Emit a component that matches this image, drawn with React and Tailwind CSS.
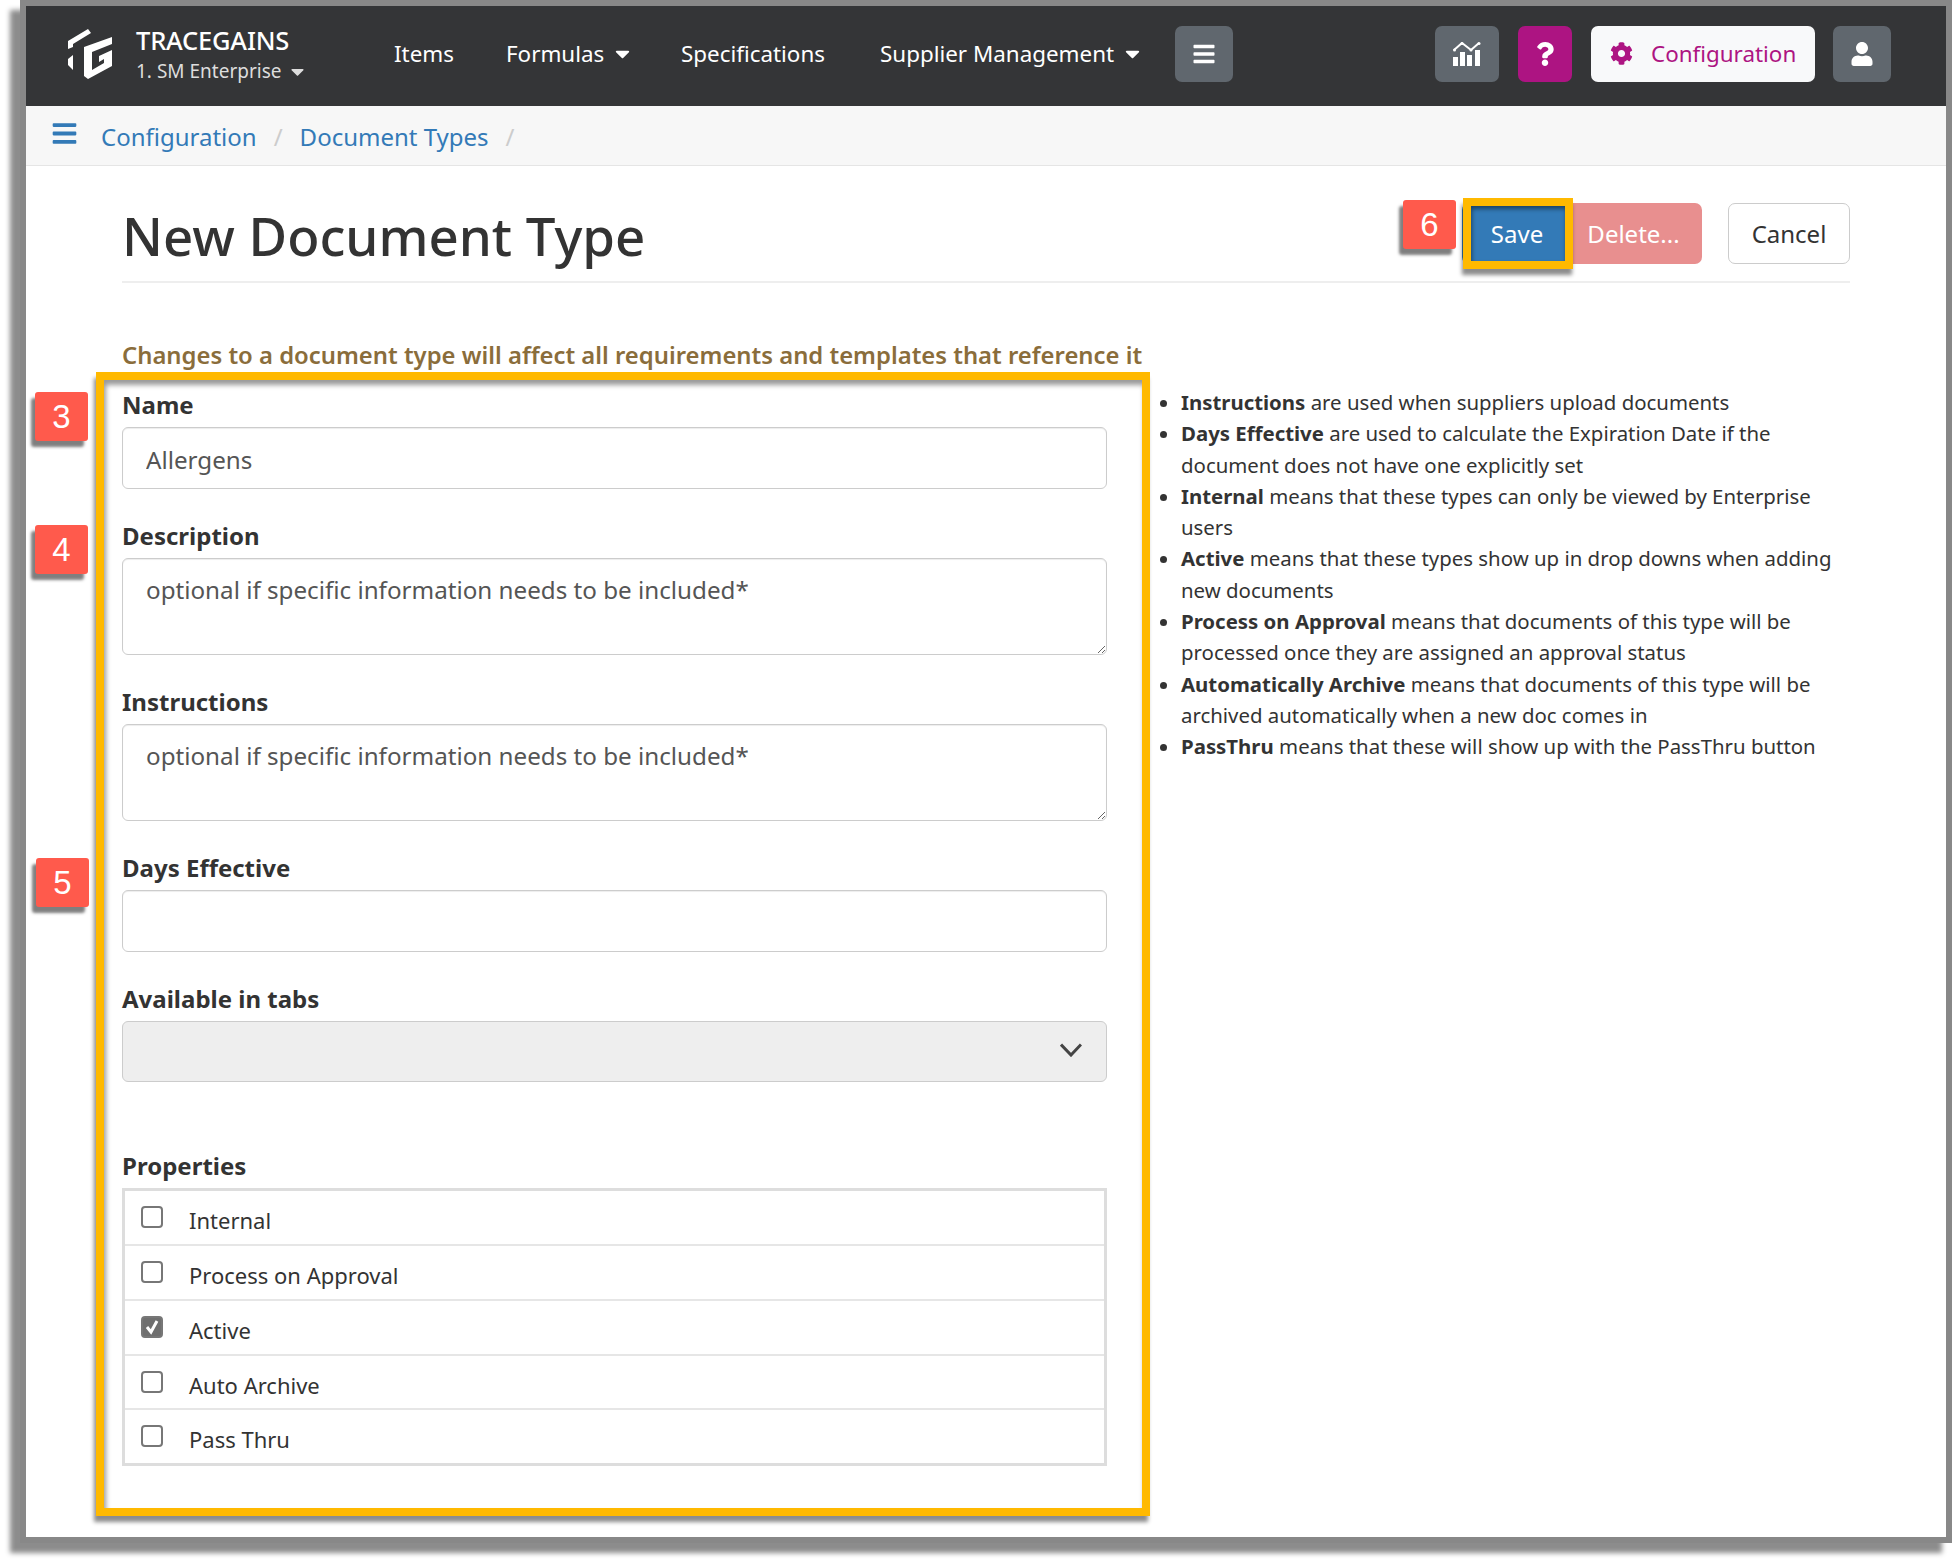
import { FaBars, FaCaretDown, FaCog, FaQuestion, FaUser } from "react-icons/fa";

const navLinks = [
  { label: "Items", width: "w-[112px]" },
  { label: "Formulas", width: "w-[175px]", caret: true },
  { label: "Specifications", width: "w-[199px]" },
  { label: "Supplier Management", width: "w-[295px]", caret: true },
];

const helpLines = [
  ["Instructions", "are used when suppliers upload documents"],
  ["Days Effective", "are used to calculate the Expiration Date if the document does not have one explicitly set"],
  ["Internal", "means that these types can only be viewed by Enterprise users"],
  ["Active", "means that these types show up in drop downs when adding new documents"],
  ["Process on Approval", "means that documents of this type will be processed once they are assigned an approval status"],
  ["Automatically Archive", "means that documents of this type will be archived automatically when a new doc comes in"],
  ["PassThru", "means that these will show up with the PassThru button"],
];

const properties = [
  { label: "Internal" },
  { label: "Process on Approval" },
  { label: "Active", checked: true },
  { label: "Auto Archive" },
  { label: "Pass Thru" },
];

const Logo = () => (
  <svg viewBox="0 0 44 50" className="w-[44px] h-[50px] shrink-0" fill="#fff">
    <polygon points="0,12 20,0 23,4 5,15 5,18 0,20" />
    <polygon points="0,30 5,26 5,41 0,36" />
    <polygon points="16,18 44,8 44,15 24,23 24,41 36,34 36,30 31,33 31,27 44,21 44,37 20,50 16,47" />
  </svg>
);

const ChartIcon = () => (
  <svg viewBox="0 0 28 24" className="w-[28px] h-[24px]" fill="#fff">
    <polyline points="1,8 9,1 18,8 26,1" fill="none" stroke="#fff" strokeWidth="2" />
    <circle cx="1.5" cy="8" r="1.5" />
    <circle cx="9" cy="1.5" r="1.5" />
    <circle cx="18" cy="8" r="1.5" />
    <circle cx="26" cy="1.5" r="1.5" />
    <rect x="0" y="15" width="5" height="9" />
    <rect x="7" y="10" width="5" height="14" />
    <rect x="14" y="13" width="5" height="11" />
    <rect x="22" y="8" width="5" height="16" />
  </svg>
);

const Badge = ({ children, className }) => (
  <div
    className={`absolute w-[53px] h-[49px] bg-[#ff5a4c] rounded-[3px] flex items-center justify-center text-white text-[33px] font-['Liberation_Sans',sans-serif] shadow-[-4px_6px_3px_rgba(0,0,0,0.5)] ${className}`}
  >
    {children}
  </div>
);

const Field = ({ label, className, children }) => (
  <div className={className}>
    <label className="block font-bold text-[24px] leading-[32px] pt-[1px] mb-[6px] text-[#333]">{label}</label>
    {children}
  </div>
);

const inputClass =
  "w-full px-[23px] border border-[#ccc] rounded-[6px] shadow-[inset_0_1px_1px_rgba(0,0,0,0.075)] text-[#555] text-[24.2px]";

export default function App() {
  return (
    <div className="h-[1563px] bg-white font-['Noto_Sans',sans-serif] text-[#333] overflow-hidden pl-[20px]">
      <div className="relative h-[1543px] border-x-[6px] border-y-[6px] border-[#888] bg-white shadow-[-10px_10px_5px_rgba(0,0,0,0.45)]">
        <nav className="h-[100px] bg-[#343537] flex items-center pl-[42px] pr-[55px] pb-[5px]">
          <div className="flex items-center gap-[24px] w-[326px]">
            <Logo />
            <div className="pt-[4px]">
              <div className="text-white text-[25.5px] font-medium leading-[31px] tracking-[-0.2px]">TRACEGAINS</div>
              <div className="text-[#ddd] text-[19px] leading-[30px] flex items-center gap-[6px]">
                1. SM Enterprise <FaCaretDown className="text-[21px]" />
              </div>
            </div>
          </div>
          {navLinks.map((link) => (
            <div key={link.label} className={`${link.width} text-white text-[22.4px] flex items-center gap-[7px]`}>
              {link.label}
              {link.caret && <FaCaretDown className="text-[23px]" />}
            </div>
          ))}
          <button className="w-[58px] h-[56px] rounded-[7px] bg-[#60676e] flex items-center justify-center text-white text-[24px]">
            <FaBars />
          </button>
          <div className="ml-auto flex items-center">
            <button className="w-[64px] h-[56px] rounded-[7px] bg-[#60676e] flex items-center justify-center">
              <ChartIcon />
            </button>
            <button className="ml-[19px] w-[54px] h-[56px] rounded-[7px] bg-[#ad1482] flex items-center justify-center text-white text-[24px]">
              <FaQuestion />
            </button>
            <button className="ml-[19px] w-[224px] h-[56px] rounded-[7px] bg-[#f8f9fa] flex items-center pl-[19px] text-[#ad1482] text-[22.4px]">
              <FaCog className="text-[23px] mr-[18px]" />
              Configuration
            </button>
            <button className="ml-[18px] w-[58px] h-[56px] rounded-[7px] bg-[#60676e] flex items-center justify-center text-white text-[24px]">
              <FaUser />
            </button>
          </div>
        </nav>

        <div className="h-[60px] bg-[#f7f7f7] border-b border-[#e5e5e5] flex items-center pl-[25px] text-[24px]">
          <FaBars className="text-[#337ab7] text-[27px] mr-[23px] mb-[5px]" />
          <span className="text-[#337ab7] pt-[2px]">Configuration</span>
          <span className="text-[#ccc] mx-[17px] pt-[2px]">/</span>
          <span className="text-[#337ab7] pt-[2px]">Document Types</span>
          <span className="text-[#ccc] mx-[17px] pt-[2px]">/</span>
        </div>

        <main className="pl-[96px] pr-[96px]">
          <div className="h-[117px] border-b-2 border-[#eee] flex items-start justify-between">
            <h1 className="text-[52.8px] font-medium leading-[70px] mt-[35px] text-[#333]">New Document Type</h1>
            <div className="flex mt-[37px]">
              <button className="w-[110px] h-[61px] bg-[#337ab7] rounded-l-[7px] text-white text-[24px]">Save</button>
              <button className="w-[130px] h-[61px] pr-[7px] bg-[#e88f8f] rounded-r-[7px] text-white text-[24px]">Delete...</button>
              <button className="ml-[26px] w-[122px] h-[61px] bg-white border border-[#ccc] rounded-[7px] text-[24px]">Cancel</button>
            </div>
          </div>

          <p className="mt-[57px] text-[#8a6d3b] font-semibold text-[23.85px] leading-[31px]">
            Changes to a document type will affect all requirements and templates that reference it
          </p>

          <div className="flex mt-[15px]">
            <form className="w-[985px] shrink-0 pt-[2px]">
              <Field label="Name">
                <input className={`${inputClass} h-[62px] pt-[2px]`} defaultValue="Allergens" />
              </Field>
              <Field label="Description" className="mt-[30px]">
                <textarea className={`${inputClass} block h-[97px] pt-[13px]`} defaultValue="optional if specific information needs to be included*" />
              </Field>
              <Field label="Instructions" className="mt-[30px]">
                <textarea className={`${inputClass} block h-[97px] pt-[13px]`} defaultValue="optional if specific information needs to be included*" />
              </Field>
              <Field label="Days Effective" className="mt-[30px]">
                <input className={`${inputClass} h-[62px]`} />
              </Field>
              <Field label="Available in tabs" className="mt-[30px]">
                <div className="h-[61px] bg-[#eee] border border-[#ccc] rounded-[6px] flex items-center justify-end pr-[24px]">
                  <svg viewBox="0 0 22 14" className="w-[22px] h-[14px] mb-[3px]" fill="none" stroke="#444" strokeWidth="3">
                    <polyline points="1,1.5 11,12 21,1.5" />
                  </svg>
                </div>
              </Field>
              <Field label="Properties" className="mt-[67px]">
                <div className="border-[3px] border-[#ddd]">
                  {properties.map((prop, i) => (
                    <div key={prop.label} className={`flex pl-[16px] ${i > 0 ? "h-[54.8px] border-t-2 border-[#e6e6e6]" : "h-[53px]"}`}>
                      <div
                        className={`mt-[15px] w-[22px] h-[22px] rounded-[4px] border-2 border-[#777] flex items-center justify-center text-white ${prop.checked ? "bg-[#6f6f6f]" : "bg-white"}`}
                      >
                        {prop.checked && (
                          <svg viewBox="0 0 16 16" className="w-[16px] h-[16px]" fill="none" stroke="#fff" strokeWidth="3">
                            <polyline points="3,8 7,13 13,2" />
                          </svg>
                        )}
                      </div>
                      <span className="ml-[26px] mt-[14px] text-[22px] leading-[30px]">{prop.label}</span>
                    </div>
                  ))}
                </div>
              </Field>
            </form>

            <ul className="ml-[55px] mt-[1px] list-disc pl-[19px] text-[20.4px] leading-[31.3px] text-[#333]">
              {helpLines.map(([term, rest]) => (
                <li key={term}>
                  <b>{term}</b> {rest}
                </li>
              ))}
            </ul>
          </div>
        </main>

        {/* annotation overlays */}
        <div className="absolute left-[70px] top-[366px] w-[1054px] h-[1144px] border-[8px] border-[#ffb900] shadow-[-2px_6px_4px_rgba(0,0,0,0.45),inset_2px_5px_5px_rgba(0,0,0,0.4)] pointer-events-none" />
        <div className="absolute left-[1437px] top-[192px] w-[110px] h-[71px] border-[8px] border-[#ffb900] shadow-[-1px_6px_4px_rgba(0,0,0,0.45),inset_1px_3px_4px_rgba(0,0,0,0.45)] pointer-events-none" />
        <Badge className="left-[9px] top-[386px]">3</Badge>
        <Badge className="left-[9px] top-[519px]">4</Badge>
        <Badge className="left-[10px] top-[852px]">5</Badge>
        <Badge className="left-[1377px] top-[194px]">6</Badge>
      </div>
    </div>
  );
}
